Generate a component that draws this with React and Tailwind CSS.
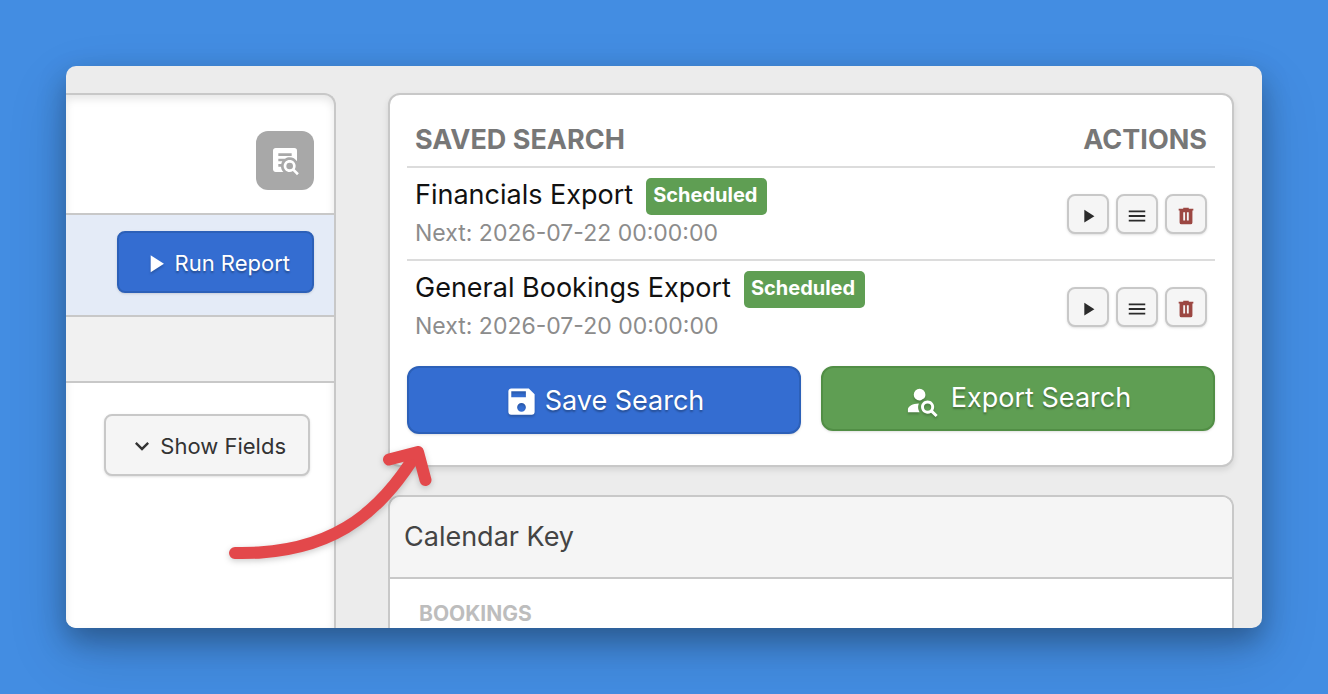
import React from 'react';

const icons = {
  play: 'M8,5.14V19.14L19,12.14L8,5.14Z',
  menu: 'M3,6H21V8H3V6M3,11H21V13H3V11M3,16H21V18H3V16Z',
  trash:
    'M9,3V4H4V6H5V19A2,2 0 0,0 7,21H17A2,2 0 0,0 19,19V6H20V4H15V3H9M9,8H11V17H9V8M13,8H15V17H13V8Z',
  chevronDown: 'M7.41,8.58L12,13.17L16.59,8.58L18,10L12,16L6,10L7.41,8.58Z',
  save: 'M15,9H5V5H15M12,19A3,3 0 0,1 9,16A3,3 0 0,1 12,13A3,3 0 0,1 15,16A3,3 0 0,1 12,19M17,3H5C3.89,3 3,3.9 3,5V19A2,2 0 0,0 5,21H19A2,2 0 0,0 21,19V7L17,3Z',
  accountSearch:
    'M15.5,12C18,12 20,14 20,16.5C20,17.38 19.75,18.21 19.31,18.9L22.39,22L21,23.39L17.88,20.32C17.19,20.75 16.37,21 15.5,21C13,21 11,19 11,16.5C11,14 13,12 15.5,12M15.5,14A2.5,2.5 0 0,0 13,16.5A2.5,2.5 0 0,0 15.5,19A2.5,2.5 0 0,0 18,16.5A2.5,2.5 0 0,0 15.5,14M10,4A4,4 0 0,1 14,8C14,8.91 13.69,9.75 13.18,10.43C12.32,10.75 11.55,11.26 10.91,11.9L10,12A4,4 0 0,1 6,8A4,4 0 0,1 10,4M2,20V18C2,15.88 5.31,14.14 9.5,14C9.18,14.78 9,15.62 9,16.5C9,17.79 9.38,19 10,20H2Z',
  textSearch:
    'M15.5,12C18,12 20,14 20,16.5C20,17.38 19.75,18.21 19.31,18.9L22.39,22L21,23.39L17.88,20.32C17.19,20.75 16.37,21 15.5,21C13,21 11,19 11,16.5C11,14 13,12 15.5,12M15.5,14A2.5,2.5 0 0,0 13,16.5A2.5,2.5 0 0,0 15.5,19A2.5,2.5 0 0,0 18,16.5A2.5,2.5 0 0,0 15.5,14M7,15V17H9C9.14,18.55 9.8,19.94 10.81,21H5C3.89,21 3,20.1 3,19V5C3,3.89 3.89,3 5,3H19A2,2 0 0,1 21,5V13.03C19.85,11.21 17.82,10 15.5,10C14.23,10 13.04,10.37 12.04,11H7V13H10C9.64,13.6 9.34,14.28 9.17,15H7M17,9V7H7V9H17Z',
};

const Icon = ({ name, className }) => (
  <svg viewBox="0 0 24 24" fill="currentColor" aria-hidden="true" className={className}>
    <path d={icons[name]} />
  </svg>
);

const savedSearches = [
  { id: 1, name: 'Financials Export', next: '2026-07-22 00:00:00' },
  { id: 2, name: 'General Bookings Export', next: '2026-07-20 00:00:00' },
];

const ActionButton = ({ icon, label, className }) => (
  <button
    type="button"
    aria-label={label}
    className={`flex h-10 w-[42px] items-center justify-center rounded-lg border-2 border-[#c8c8c8] bg-[#f5f5f5] pt-1 shadow-sm ${className}`}
  >
    <Icon name={icon} className="size-[22px]" />
  </button>
);

const ReportPanel = () => (
  <section className="flex w-[270px] shrink-0 flex-col rounded-tr-xl border-t-2 border-r-2 border-[#c8c8c8] bg-white shadow-[inset_0_4px_8px_rgba(0,0,0,0.1)]">
    <div className="flex justify-end border-b-2 border-[#c8c8c8] pt-9 pr-5 pb-[23px]">
      <button
        type="button"
        aria-label="Preview report"
        className="flex h-[59px] w-[58px] items-center justify-center rounded-xl bg-[#a8a8a8] pb-0.5 text-white"
      >
        <Icon name="textSearch" className="size-8" />
      </button>
    </div>

    <div className="flex justify-end border-b-2 border-[#c8c8c8] bg-[#e4ebf7] pt-4 pr-5 pb-[22px]">
      <button
        type="button"
        className="flex h-[62px] items-center gap-[5px] rounded-lg border-2 border-[#2c60b8] bg-[#346dd1] px-[22px] pt-0.5 text-[22px] text-white shadow-sm text-shadow-[0_2px_2px_rgba(0,0,0,0.3)]"
      >
        <Icon name="play" className="size-[29px] drop-shadow-[0_2px_1px_rgba(0,0,0,0.2)]" />
        Run Report
      </button>
    </div>

    <div className="h-[66px] border-b-2 border-[#c8c8c8] bg-[#f1f1f1]" />

    <div className="flex justify-end pt-[31px] pr-6">
      <button
        type="button"
        className="flex h-[62px] items-center gap-1 rounded-lg border-2 border-[#c8c8c8] bg-[#f5f5f5] px-[22px] pt-0.5 text-[22px] text-[#333] shadow-sm"
      >
        <Icon name="chevronDown" className="size-7" />
        Show Fields
      </button>
    </div>
  </section>
);

const SavedSearchCard = () => (
  <section className="rounded-xl border-2 border-[#c8c8c8] bg-white px-[17px] pt-4 pb-[31px] shadow-[0_3px_6px_rgba(0,0,0,0.1)]">
    <table className="w-full border-collapse">
      <thead>
        <tr className="h-14 border-b-2 border-[#dcdcdc] text-[27px] leading-9 text-[#777]">
          <th className="px-2 pt-0.5 text-left font-bold">SAVED SEARCH</th>
          <th className="px-2 pt-0.5 text-right font-bold">ACTIONS</th>
        </tr>
      </thead>
      <tbody>
        {savedSearches.map((search) => (
          <tr key={search.id} className="border-b-2 border-[#dcdcdc] last:border-b-0">
            <td className="px-2 py-2.5">
              <div className="flex items-start gap-[13px]">
                <span className="text-[27px] leading-[34px] text-[#111]">{search.name}</span>
                <span className="rounded-[5px] bg-[#5f9e53] pr-2.5 pb-[3px] pl-[7px] text-[20px] leading-[34px] font-bold text-white">
                  Scheduled
                </span>
              </div>
              <div className="mt-0.5 text-[23px] leading-8 text-[#8c8c8c]">Next: {search.next}</div>
            </td>
            <td className="px-2">
              <div className="flex justify-end gap-[7px]">
                <ActionButton icon="play" label={`Run ${search.name}`} className="text-[#2b2b2b]" />
                <ActionButton icon="menu" label={`Edit ${search.name}`} className="text-[#2b2b2b]" />
                <ActionButton icon="trash" label={`Delete ${search.name}`} className="text-[#9c4742]" />
              </div>
            </td>
          </tr>
        ))}
      </tbody>
    </table>

    <div className="mt-3.5 grid grid-cols-2 items-start gap-5">
      <button
        type="button"
        className="flex h-[68px] items-center justify-center gap-1.5 rounded-xl border-2 border-[#2c60b8] bg-[#346dd1] pt-0.5 text-[27px] text-white shadow-sm text-shadow-[0_2px_2px_rgba(0,0,0,0.3)]"
      >
        <Icon name="save" className="size-[35px] drop-shadow-[0_2px_1px_rgba(0,0,0,0.2)]" />
        Save Search
      </button>
      <button
        type="button"
        className="flex h-[65px] items-center justify-center gap-[11px] rounded-xl border-2 border-[#518e45] bg-[#5f9e53] text-[27px] text-white shadow-sm text-shadow-[0_2px_2px_rgba(0,0,0,0.3)]"
      >
        <Icon name="accountSearch" className="mt-1 size-[35px] drop-shadow-[0_2px_1px_rgba(0,0,0,0.2)]" />
        Export Search
      </button>
    </div>
  </section>
);

const CalendarKeyCard = () => (
  <section className="flex-1 overflow-hidden rounded-t-xl border-2 border-b-0 border-[#c8c8c8] bg-white">
    <h2 className="border-b-2 border-[#c8c8c8] bg-[#f5f5f5] px-3.5 py-5 text-[27px] leading-10 text-[#444]">
      Calendar Key
    </h2>
    <h3 className="px-[29px] pt-[23px] text-[21px] leading-6 font-bold text-[#bdbdbd]">BOOKINGS</h3>
  </section>
);

const App = () => {
  return (
    <div className="flex min-h-screen bg-[#438de2] p-[66px] font-['Inter','Liberation_Sans',sans-serif]">
      <main className="relative flex flex-1 gap-[52px] overflow-hidden rounded-[10px] bg-[#ececec] pt-[27px] pr-7 shadow-[0_12px_28px_rgba(0,0,0,0.28),0_24px_60px_rgba(0,0,0,0.15)]">
        <ReportPanel />

        <div className="flex min-w-0 flex-1 flex-col gap-7">
          <SavedSearchCard />
          <CalendarKeyCard />
        </div>

        {/* Arrow pointing at Save Search */}
        <svg
          viewBox="0 0 220 130"
          fill="none"
          stroke="#e3484b"
          strokeWidth="12"
          strokeLinecap="round"
          strokeLinejoin="round"
          aria-hidden="true"
          className="pointer-events-none absolute top-[374px] left-[154px] h-[130px] w-[220px] drop-shadow-[0_2px_3px_rgba(0,0,0,0.2)]"
        >
          <path d="M15 113C108 115 158 76 196 14" />
          <path d="M169 19.500L198 12L205.500 40" />
        </svg>
      </main>
    </div>
  );
};

export default App;
